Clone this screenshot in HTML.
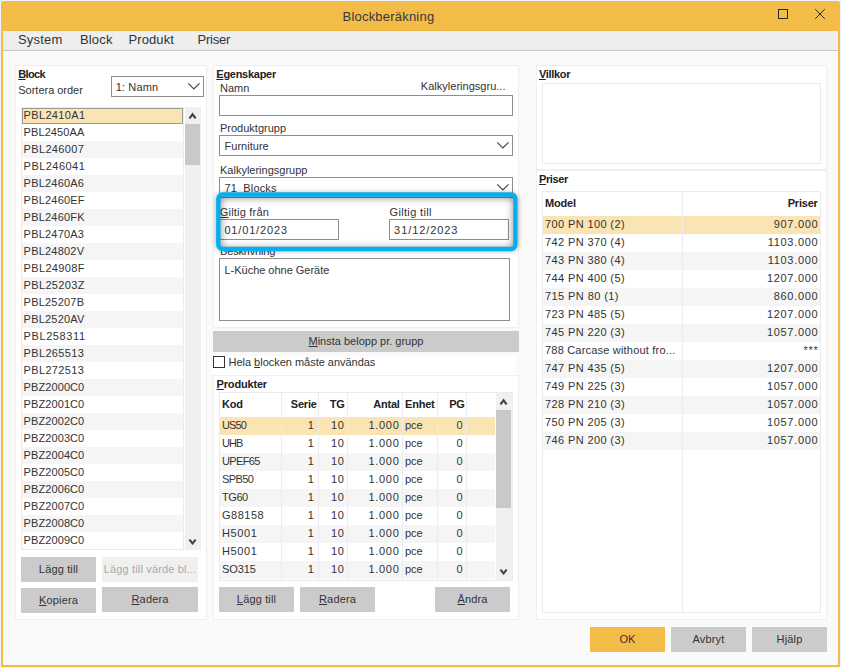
<!DOCTYPE html>
<html lang="sv"><head><meta charset="utf-8"><title>Blockberäkning</title>
<style>
*{box-sizing:border-box;margin:0;padding:0}
html,body{width:841px;height:668px;overflow:hidden;background:#f0f3fc;font-family:"Liberation Sans",sans-serif;font-size:11px;color:#333}
body{position:relative}
body>div,body>svg{position:absolute}
u{text-decoration:underline;text-underline-offset:1px}
.win{left:1px;top:1px;width:839px;height:666px;background:#f3bc48;border-radius:2px 2px 0 0}
.inner{left:3px;top:31px;width:835px;height:634px;background:#fafafa}
.menubar{left:3px;top:31px;width:835px;height:19px;background:#eeeeee}
.menuline{left:3px;top:50px;width:835px;height:1px;background:#c6c6c6}
.t{position:absolute;white-space:nowrap;line-height:14px;font-size:11px;color:#333}
.title{color:#3a3a3a}
.b{font-weight:bold;color:#222}
.panel{background:#fff;border:1px solid #efefef}
.combo,.inp{position:absolute;background:#fff;border:1px solid #8e8e8e}
.chev{position:absolute;right:2px;top:5px}
.list{background:#fff;border:1px solid #ebebeb;overflow:hidden}
.li{position:absolute;left:0;width:161px;height:17px;line-height:17px;font-size:11px;color:#333;white-space:nowrap}
.li span{position:absolute;left:1.6px;top:0;letter-spacing:.28px}
.li.even{background:#fff}.li.odd{background:#f5f5f5}
.li.sel{background:#fbe4b4;border:1px solid #9a9a9a;height:16px;top:0!important}
.li.sel span{left:.6px;top:-2px}
.sb{position:absolute;background:#f0f0f0}
.sb .thumb{position:absolute;background:#c9c9c9}
.sb .arr{position:absolute}
.btn{letter-spacing:.15px;background:#cbcbcb;color:#333;text-align:center;font-size:11px;line-height:25px;white-space:nowrap;overflow:hidden}
.btn.dis{background:#f0f0f0;color:#aaa}
.btn.ok{background:#f3bc48}
.hlo{border-radius:6.5px;box-shadow:0 0 5px rgba(0,0,0,.35)}
.hli{border-radius:2px;box-shadow:inset 0 1px 8px rgba(0,0,0,.55)}
.strip{background:#fff}
.cb{width:12px;height:12px;border:1px solid #333;background:#fff}
.grid{background:#fff;border:1px solid #ebebeb;overflow:hidden}
.gh{position:absolute;left:0;top:0;width:100%;height:24px;font-weight:bold;color:#222}
.gh .c{line-height:22px;letter-spacing:-.2px}
.gr{position:absolute;left:0;height:18px}
.gr.even{background:#fff}.gr.odd{background:#f5f5f5}.gr.sel{background:#fbe4b4}
.c{position:absolute;top:0;line-height:16px;font-size:11px;white-space:nowrap;padding:0 3px}
.c.r{text-align:right}.c.l{text-align:left}
.c.d{letter-spacing:.7px;padding-right:1.6px}
.c.m{letter-spacing:.45px}
.c.l{padding-left:2px}
.gh .c.r{padding-right:2.3px}
.vl{position:absolute;top:0;bottom:0;width:1px;background:#ececec}
.box{background:#fff;border:1px solid #ebebeb}
.c.p1{padding-right:3.4px}.c.p2{padding-right:2.4px}.c.p3{padding-right:2.5px}.c.p5{padding-right:2.8px}
.gh .c.h1{padding-right:1.3px}.gh .c.h5{padding-right:1.3px}

</style></head>
<body>
<div class="win"></div>
<div class="inner"></div>
<div class="menubar"></div><div class="menuline"></div>
<div class="t title" style="left:342.50px;top:9px;letter-spacing:0.21px;font-size:13px;line-height:16px;">Blockberäkning</div>
<svg class="ctl" style="left:777px;top:8px" width="12" height="12" viewBox="0 0 12 12"><rect x="1.5" y="1.5" width="9" height="9" fill="none" stroke="#2e2a22" stroke-width="1"/></svg>
<svg class="ctl" style="left:814px;top:8px" width="12" height="12" viewBox="0 0 12 12"><path d="M1.2 1.2 L10.8 10.8 M10.8 1.2 L1.2 10.8" fill="none" stroke="#2e2a22" stroke-width="1"/></svg>
<div class="t menu" style="left:18.00px;top:32px;letter-spacing:0.18px;font-size:13px;line-height:16px;">System</div>
<div class="t menu" style="left:79.90px;top:32px;letter-spacing:0.20px;font-size:13px;line-height:16px;">Block</div>
<div class="t menu" style="left:128.40px;top:32px;letter-spacing:0.12px;font-size:13px;line-height:16px;">Produkt</div>
<div class="t menu" style="left:197.50px;top:32px;letter-spacing:-0.24px;font-size:13px;line-height:16px;">Priser</div>
<div class="panel" style="left:15px;top:65px;width:192px;height:555px"></div>
<div class="t b" style="left:18.30px;top:67px;letter-spacing:-0.67px;"><u>B</u>lock</div>
<div class="t" style="left:18.30px;top:83px;letter-spacing:-0.02px;">Sortera order</div>
<div class="combo" style="left:111px;top:76px;width:93px;height:21px"><svg class="chev" width="14" height="9" viewBox="0 0 14 9"><path d="M1.2 1.4 L6.85 6.95 L12.5 1.4" fill="none" stroke="#484848" stroke-width="1.25"/></svg></div>
<div class="t" style="left:115.70px;top:80px;letter-spacing:0.15px;">1: Namn</div>
<div class="list" style="left:21px;top:107px;width:163px;height:443px">
<div class="li sel" style="top:-1px"><span style="letter-spacing:0.34px">PBL2410A1</span></div>
<div class="li even" style="top:16px"><span style="letter-spacing:0.09px">PBL2450AA</span></div>
<div class="li odd" style="top:33px"><span style="letter-spacing:0.34px">PBL246007</span></div>
<div class="li even" style="top:50px"><span style="letter-spacing:0.46px">PBL246041</span></div>
<div class="li odd" style="top:67px"><span style="letter-spacing:0.21px">PBL2460A6</span></div>
<div class="li even" style="top:84px"><span style="letter-spacing:0.21px">PBL2460EF</span></div>
<div class="li odd" style="top:101px"><span style="letter-spacing:0.21px">PBL2460FK</span></div>
<div class="li even" style="top:118px"><span style="letter-spacing:0.21px">PBL2470A3</span></div>
<div class="li odd" style="top:135px"><span style="letter-spacing:0.21px">PBL24802V</span></div>
<div class="li even" style="top:152px"><span style="letter-spacing:0.34px">PBL24908F</span></div>
<div class="li odd" style="top:169px"><span style="letter-spacing:0.34px">PBL25203Z</span></div>
<div class="li even" style="top:186px"><span style="letter-spacing:0.21px">PBL25207B</span></div>
<div class="li odd" style="top:203px"><span style="letter-spacing:0.21px">PBL2520AV</span></div>
<div class="li even" style="top:220px"><span style="letter-spacing:0.59px">PBL258311</span></div>
<div class="li odd" style="top:237px"><span style="letter-spacing:0.34px">PBL265513</span></div>
<div class="li even" style="top:254px"><span style="letter-spacing:0.34px">PBL272513</span></div>
<div class="li odd" style="top:271px"><span style="letter-spacing:0.09px">PBZ2000C0</span></div>
<div class="li even" style="top:288px"><span style="letter-spacing:0.09px">PBZ2001C0</span></div>
<div class="li odd" style="top:305px"><span style="letter-spacing:0.09px">PBZ2002C0</span></div>
<div class="li even" style="top:322px"><span style="letter-spacing:0.09px">PBZ2003C0</span></div>
<div class="li odd" style="top:339px"><span style="letter-spacing:0.09px">PBZ2004C0</span></div>
<div class="li even" style="top:356px"><span style="letter-spacing:0.09px">PBZ2005C0</span></div>
<div class="li odd" style="top:373px"><span style="letter-spacing:0.09px">PBZ2006C0</span></div>
<div class="li even" style="top:390px"><span style="letter-spacing:0.09px">PBZ2007C0</span></div>
<div class="li odd" style="top:407px"><span style="letter-spacing:0.09px">PBZ2008C0</span></div>
<div class="li even" style="top:424px"><span style="letter-spacing:0.09px">PBZ2009C0</span></div>
</div>
<div class="sb" style="left:185px;top:107px;width:16px;height:443px"><div class="thumb" style="left:0;top:17px;width:15px;height:41px"></div><svg class="arr" style="left:3px;top:5px" width="10" height="7" viewBox="0 0 10 7"><path d="M1.45 6.4 L4.55 2.4 L7.65 6.4" fill="none" stroke="#454545" stroke-width="2.2"/></svg><svg class="arr" style="left:3px;bottom:5px" width="10" height="7" viewBox="0 0 10 7"><path d="M1.45 1.6 L4.55 5.4 L7.65 1.6" fill="none" stroke="#454545" stroke-width="2.2"/></svg></div>
<div class="btn" style="left:21px;top:557px;width:75px;height:25px">Lägg till</div>
<div class="btn dis" style="left:102px;top:557px;width:96px;height:25px">Lägg till värde bl...</div>
<div class="btn" style="left:21px;top:588px;width:75px;height:25px"><u>K</u>opiera</div>
<div class="btn" style="left:102px;top:587px;width:96px;height:25px"><u>R</u>adera</div>
<div class="panel" style="left:213px;top:65px;width:306px;height:263px"></div>
<div class="t b" style="left:216.30px;top:67px;letter-spacing:-0.27px;"><u>E</u>genskaper</div>
<div class="t" style="left:220.00px;top:81px;">Namn</div>
<div class="t" style="left:420.80px;top:79px;letter-spacing:0.02px;">Kalkyleringsgru...</div>
<div class="inp" style="left:219px;top:95px;width:294px;height:21px"></div>
<div class="t" style="left:220.00px;top:121px;">Produktgrupp</div>
<div class="combo" style="left:219px;top:135px;width:294px;height:21px"><svg class="chev" width="14" height="9" viewBox="0 0 14 9"><path d="M1.2 1.4 L6.85 6.95 L12.5 1.4" fill="none" stroke="#484848" stroke-width="1.25"/></svg></div>
<div class="t" style="left:224.50px;top:139px;letter-spacing:0.02px;">Furniture</div>
<div class="t" style="left:220.00px;top:163px;">Kalkyleringsgrupp</div>
<div class="combo" style="left:219px;top:177px;width:294px;height:21px"><svg class="chev" width="14" height="9" viewBox="0 0 14 9"><path d="M1.2 1.4 L6.85 6.95 L12.5 1.4" fill="none" stroke="#484848" stroke-width="1.25"/></svg></div>
<div class="t" style="left:224.50px;top:181px;letter-spacing:0.13px;">71&nbsp; Blocks</div>
<div class="t" style="left:220.00px;top:244px;letter-spacing:-0.15px;">Beskrivning</div>
<div class="t" style="left:219.80px;top:205px;letter-spacing:0.20px;"><u>G</u>iltig från</div>
<div class="t" style="left:389.50px;top:205px;letter-spacing:0.34px;">Giltig till</div>
<div class="inp" style="left:219px;top:219px;width:120px;height:21px"></div>
<div class="inp" style="left:389px;top:219px;width:120px;height:21px"></div>
<div class="t" style="left:224.40px;top:223px;letter-spacing:0.84px;">01/01/2023</div>
<div class="t" style="left:394.10px;top:223px;letter-spacing:0.92px;">31/12/2023</div>
<div class="hlo" style="left:216px;top:193px;width:302px;height:58px"></div>
<div class="hli" style="left:220px;top:196px;width:294px;height:52px"></div>
<svg class="hls" style="left:210px;top:187px" width="314" height="70" viewBox="210 187 314 70"><rect x="218.3" y="194.5" width="297.2" height="54.5" rx="4.3" ry="4.3" fill="none" stroke="#06aeee" stroke-width="4.4"/></svg>
<div class="inp" style="left:219px;top:258px;width:291px;height:63px"></div>
<div class="t" style="left:224.50px;top:263px;letter-spacing:-0.02px;">L-Küche ohne Geräte</div>
<div class="btn" style="left:213px;top:331px;width:306px;height:21px;line-height:20px;letter-spacing:0"><u>M</u>insta belopp pr. grupp</div>
<div class="strip" style="left:213px;top:356px;width:303px;height:19px"></div>
<div class="cb" style="left:213px;top:356px"></div>
<div class="t" style="left:228.50px;top:355px;letter-spacing:-0.02px;">Hela <u>b</u>locken måste användas</div>
<div class="panel" style="left:213px;top:375px;width:306px;height:245px"></div>
<div class="t b" style="left:216.60px;top:377px;letter-spacing:-0.18px;"><u>P</u>rodukter</div>
<div class="grid" style="left:219px;top:392px;width:294px;height:189px">
<div class="gh"><span class="c l h0" style="left:0px;width:61px">Kod</span><span class="c r h1" style="left:62px;width:36px">Serie</span><span class="c r h2" style="left:99px;width:28px">TG</span><span class="c r h3" style="left:128px;width:54px">Antal</span><span class="c l h4" style="left:183px;width:34px">Enhet</span><span class="c r h5" style="left:218px;width:28px">PG</span></div>
<div class="gr sel" style="top:24px;width:275px"><span class="c l" style="left:0px;width:61px"><span style="letter-spacing:-0.87px">US50</span></span><span class="c r d p1" style="left:62px;width:36px">1</span><span class="c r d p2" style="left:99px;width:28px">10</span><span class="c r d p3" style="left:128px;width:54px">1.000</span><span class="c l" style="left:183px;width:34px">pce</span><span class="c r d p5" style="left:218px;width:28px">0</span></div>
<div class="gr even" style="top:42px;width:275px"><span class="c l" style="left:0px;width:61px"><span style="letter-spacing:-0.95px">UHB</span></span><span class="c r d p1" style="left:62px;width:36px">1</span><span class="c r d p2" style="left:99px;width:28px">10</span><span class="c r d p3" style="left:128px;width:54px">1.000</span><span class="c l" style="left:183px;width:34px">pce</span><span class="c r d p5" style="left:218px;width:28px">0</span></div>
<div class="gr odd" style="top:60px;width:275px"><span class="c l" style="left:0px;width:61px"><span style="letter-spacing:-0.66px">UPEF65</span></span><span class="c r d p1" style="left:62px;width:36px">1</span><span class="c r d p2" style="left:99px;width:28px">10</span><span class="c r d p3" style="left:128px;width:54px">1.000</span><span class="c l" style="left:183px;width:34px">pce</span><span class="c r d p5" style="left:218px;width:28px">0</span></div>
<div class="gr even" style="top:78px;width:275px"><span class="c l" style="left:0px;width:61px"><span style="letter-spacing:-0.60px">SPB50</span></span><span class="c r d p1" style="left:62px;width:36px">1</span><span class="c r d p2" style="left:99px;width:28px">10</span><span class="c r d p3" style="left:128px;width:54px">1.000</span><span class="c l" style="left:183px;width:34px">pce</span><span class="c r d p5" style="left:218px;width:28px">0</span></div>
<div class="gr odd" style="top:96px;width:275px"><span class="c l" style="left:0px;width:61px"><span style="letter-spacing:-0.43px">TG60</span></span><span class="c r d p1" style="left:62px;width:36px">1</span><span class="c r d p2" style="left:99px;width:28px">10</span><span class="c r d p3" style="left:128px;width:54px">1.000</span><span class="c l" style="left:183px;width:34px">pce</span><span class="c r d p5" style="left:218px;width:28px">0</span></div>
<div class="gr even" style="top:114px;width:275px"><span class="c l" style="left:0px;width:61px"><span style="letter-spacing:0.50px">G88158</span></span><span class="c r d p1" style="left:62px;width:36px">1</span><span class="c r d p2" style="left:99px;width:28px">10</span><span class="c r d p3" style="left:128px;width:54px">1.000</span><span class="c l" style="left:183px;width:34px">pce</span><span class="c r d p5" style="left:218px;width:28px">0</span></div>
<div class="gr odd" style="top:132px;width:275px"><span class="c l" style="left:0px;width:61px"><span style="letter-spacing:0.60px">H5001</span></span><span class="c r d p1" style="left:62px;width:36px">1</span><span class="c r d p2" style="left:99px;width:28px">10</span><span class="c r d p3" style="left:128px;width:54px">1.000</span><span class="c l" style="left:183px;width:34px">pce</span><span class="c r d p5" style="left:218px;width:28px">0</span></div>
<div class="gr even" style="top:150px;width:275px"><span class="c l" style="left:0px;width:61px"><span style="letter-spacing:0.60px">H5001</span></span><span class="c r d p1" style="left:62px;width:36px">1</span><span class="c r d p2" style="left:99px;width:28px">10</span><span class="c r d p3" style="left:128px;width:54px">1.000</span><span class="c l" style="left:183px;width:34px">pce</span><span class="c r d p5" style="left:218px;width:28px">0</span></div>
<div class="gr odd" style="top:168px;width:275px"><span class="c l" style="left:0px;width:61px"><span style="letter-spacing:-0.10px">SO315</span></span><span class="c r d p1" style="left:62px;width:36px">1</span><span class="c r d p2" style="left:99px;width:28px">10</span><span class="c r d p3" style="left:128px;width:54px">1.000</span><span class="c l" style="left:183px;width:34px">pce</span><span class="c r d p5" style="left:218px;width:28px">0</span></div>
<div class="vl" style="left:61px;width:1px"></div><div class="vl" style="left:98px;width:1px"></div><div class="vl" style="left:127px;width:1px"></div><div class="vl" style="left:182px;width:1px"></div><div class="vl" style="left:217px;width:1px"></div><div class="vl" style="left:246px;width:1px"></div><div class="sb" style="left:276px;top:0;width:16px;height:187px"><div class="thumb" style="left:0;top:17px;width:15px;height:98px"></div><svg class="arr" style="left:3px;top:5px" width="10" height="7" viewBox="0 0 10 7"><path d="M1.45 6.4 L4.55 2.4 L7.65 6.4" fill="none" stroke="#454545" stroke-width="2.2"/></svg><svg class="arr" style="left:3px;bottom:5px" width="10" height="7" viewBox="0 0 10 7"><path d="M1.45 1.6 L4.55 5.4 L7.65 1.6" fill="none" stroke="#454545" stroke-width="2.2"/></svg></div>
</div>
<div class="btn" style="left:219px;top:587px;width:75px;height:25px"><u>L</u>ägg till</div>
<div class="btn" style="left:300px;top:587px;width:75px;height:25px"><u>R</u>adera</div>
<div class="btn" style="left:435px;top:587px;width:75px;height:25px"><u>Ä</u>ndra</div>
<div class="panel" style="left:536px;top:65px;width:291px;height:105px"></div>
<div class="t b" style="left:539.00px;top:67px;letter-spacing:-0.33px;"><u>V</u>illkor</div>
<div class="box" style="left:542px;top:83px;width:279px;height:81px"></div>
<div class="panel" style="left:536px;top:170px;width:291px;height:450px"></div>
<div class="t b" style="left:539.00px;top:172px;letter-spacing:-0.40px;"><u>P</u>riser</div>
<div class="grid" style="left:542px;top:191px;width:279px;height:422px">
<div class="gh"><span class="c l" style="left:0;width:139px">Model</span><span class="c r" style="left:140px;width:137px">Priser</span></div>
<div class="gr sel" style="top:24px;width:277px"><span class="c l" style="left:0;width:139px;letter-spacing:0.38px">700 PN 100 (2)</span><span class="c r d" style="left:140px;width:137px">907.000</span></div>
<div class="gr even" style="top:42px;width:277px"><span class="c l" style="left:0;width:139px;letter-spacing:0.38px">742 PN 370 (4)</span><span class="c r d" style="left:140px;width:137px">1103.000</span></div>
<div class="gr odd" style="top:60px;width:277px"><span class="c l" style="left:0;width:139px;letter-spacing:0.38px">743 PN 380 (4)</span><span class="c r d" style="left:140px;width:137px">1103.000</span></div>
<div class="gr even" style="top:78px;width:277px"><span class="c l" style="left:0;width:139px;letter-spacing:0.38px">744 PN 400 (5)</span><span class="c r d" style="left:140px;width:137px">1207.000</span></div>
<div class="gr odd" style="top:96px;width:277px"><span class="c l" style="left:0;width:139px;letter-spacing:0.42px">715 PN 80 (1)</span><span class="c r d" style="left:140px;width:137px">860.000</span></div>
<div class="gr even" style="top:114px;width:277px"><span class="c l" style="left:0;width:139px;letter-spacing:0.38px">723 PN 485 (5)</span><span class="c r d" style="left:140px;width:137px">1207.000</span></div>
<div class="gr odd" style="top:132px;width:277px"><span class="c l" style="left:0;width:139px;letter-spacing:0.38px">745 PN 220 (3)</span><span class="c r d" style="left:140px;width:137px">1057.000</span></div>
<div class="gr even" style="top:150px;width:277px"><span class="c l" style="left:0;width:139px;letter-spacing:0.20px">788 Carcase without fro...</span><span class="c r d" style="left:140px;width:137px">***</span></div>
<div class="gr odd" style="top:168px;width:277px"><span class="c l" style="left:0;width:139px;letter-spacing:0.38px">747 PN 435 (5)</span><span class="c r d" style="left:140px;width:137px">1207.000</span></div>
<div class="gr even" style="top:186px;width:277px"><span class="c l" style="left:0;width:139px;letter-spacing:0.38px">749 PN 225 (3)</span><span class="c r d" style="left:140px;width:137px">1057.000</span></div>
<div class="gr odd" style="top:204px;width:277px"><span class="c l" style="left:0;width:139px;letter-spacing:0.38px">728 PN 210 (3)</span><span class="c r d" style="left:140px;width:137px">1057.000</span></div>
<div class="gr even" style="top:222px;width:277px"><span class="c l" style="left:0;width:139px;letter-spacing:0.38px">750 PN 205 (3)</span><span class="c r d" style="left:140px;width:137px">1057.000</span></div>
<div class="gr odd" style="top:240px;width:277px"><span class="c l" style="left:0;width:139px;letter-spacing:0.38px">746 PN 200 (3)</span><span class="c r d" style="left:140px;width:137px">1057.000</span></div>
<div class="vl" style="left:139px"></div></div>
<div class="btn ok" style="left:590px;top:627px;width:75px;height:25px">OK</div>
<div class="btn" style="left:671px;top:627px;width:75px;height:25px">Avbryt</div>
<div class="btn" style="left:752px;top:627px;width:75px;height:25px">Hjälp</div>
</body></html>
